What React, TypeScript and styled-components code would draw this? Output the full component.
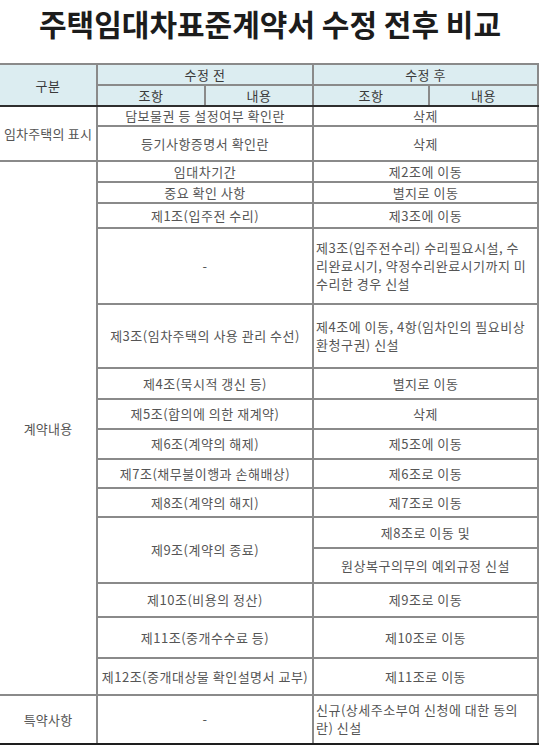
import React from 'react'
import styled, { createGlobalStyle } from 'styled-components'

type Row = {
  group?: string
  span?: number
  before?: string
  beforeSpan?: number
  after: string[]
  left?: boolean
  h: number
  top?: boolean
}

const rows: Row[] = [
  { group: '임차주택의 표시', span: 2, before: '담보물권 등 설정여부 확인란', after: ['삭제'], h: 20, top: true },
  { before: '등기사항증명서 확인란', after: ['삭제'], h: 35 },
  { group: '계약내용', span: 15, before: '임대차기간', after: ['제2조에 이동'], h: 21, top: true },
  { before: '중요 확인 사항', after: ['별지로 이동'], h: 21 },
  { before: '제1조(입주전 수리)', after: ['제3조에 이동'], h: 25 },
  {
    before: '-',
    after: ['제3조(입주전수리) 수리필요시설, 수', '리완료시기, 약정수리완료시기까지 미', '수리한 경우 신설'],
    left: true,
    h: 76,
  },
  {
    before: '제3조(임차주택의 사용 관리 수선)',
    after: ['제4조에 이동, 4항(임차인의 필요비상', '환청구권) 신설'],
    left: true,
    h: 64,
  },
  { before: '제4조(묵시적 갱신 등)', after: ['별지로 이동'], h: 31 },
  { before: '제5조(합의에 의한 재계약)', after: ['삭제'], h: 30 },
  { before: '제6조(계약의 해제)', after: ['제5조에 이동'], h: 30 },
  { before: '제7조(채무불이행과 손해배상)', after: ['제6조로 이동'], h: 29 },
  { before: '제8조(계약의 해지)', after: ['제7조로 이동'], h: 29 },
  { before: '제9조(계약의 종료)', beforeSpan: 2, after: ['제8조로 이동 및'], h: 31 },
  { after: ['원상복구의무의 예외규정 신설'], h: 35 },
  { before: '제10조(비용의 정산)', after: ['제9조로 이동'], h: 34 },
  { before: '제11조(중개수수료 등)', after: ['제10조로 이동'], h: 41 },
  { before: '제12조(중개대상물 확인설명서 교부)', after: ['제11조로 이동'], h: 37 },
  {
    group: '특약사항',
    span: 1,
    before: '-',
    after: ['신규(상세주소부여 신청에 대한 동의', '란) 신설'],
    left: true,
    h: 49,
    top: true,
  },
]

const App = () => {
  return (
    <>
      <GlobalStyle />
      <Page>
        <Title>주택임대차표준계약서 수정 전후 비교</Title>
        <Table>
          <colgroup>
            <col style={{ width: 97 }} />
            <col style={{ width: 108 }} />
            <col style={{ width: 108 }} />
            <col style={{ width: 116 }} />
            <col style={{ width: 109 }} />
          </colgroup>
          <thead>
            <tr style={{ height: 20 }}>
              <Th rowSpan={2}>구분</Th>
              <Th colSpan={2}>수정 전</Th>
              <Th colSpan={2}>수정 후</Th>
            </tr>
            <tr style={{ height: 21 }}>
              <Th>조항</Th>
              <Th>내용</Th>
              <Th>조항</Th>
              <Th>내용</Th>
            </tr>
          </thead>
          <tbody>
            {rows.map((r, i) => (
              <Tr key={i} $h={r.h} $top={r.top}>
                {r.group && <Group rowSpan={r.span}>{r.group}</Group>}
                {r.before && (
                  <Td colSpan={2} rowSpan={r.beforeSpan}>
                    {r.before}
                  </Td>
                )}
                <Td colSpan={2} $left={r.left}>
                  {r.after.map((line, j) => (
                    <div key={j}>{line}</div>
                  ))}
                </Td>
              </Tr>
            ))}
          </tbody>
        </Table>
      </Page>
    </>
  )
}

export default App

const GlobalStyle = createGlobalStyle`
  body {
    margin: 0;
    background: #ffffff;
    font-family: "Noto Sans CJK KR", "Noto Sans", sans-serif;
  }
`

const Page = styled.div`
  width: 540px;
  height: 745px;
  overflow: hidden;
  background: #fff;
`

const Title = styled.h1`
  margin: 0;
  height: 63px;
  padding-top: 4px;
  box-sizing: border-box;
  text-align: center;
  font-size: 30px;
  font-weight: 700;
  line-height: 38px;
  color: #1c1c1c;
  letter-spacing: 0;
`

const Table = styled.table`
  width: 538px;
  border-collapse: collapse;
  table-layout: fixed;
  border-top: 2px solid #2e2e2e;
  border-right: 2px solid #2e2e2e;
  border-bottom: 3px solid #1e1e1e;
  font-size: 13px;
  letter-spacing: 0.5px;
  color: #555;
`

const Th = styled.th`
  background: #dcedf1;
  font-weight: 400;
  color: #3a3a3a;
  border: 2px solid #8a8a8a;
  border-left: none;
  padding: 0;
  text-align: center;
  tr:last-child > & {
    border-bottom: 2px solid #2e2e2e;
  }
  &:first-child {
    border-bottom: 2px solid #2e2e2e;
  }
`

const Tr = styled.tr<{ $h: number; $top?: boolean }>`
  height: ${(p) => p.$h}px;
  & > td {
    border-top: 2px solid ${(p) => (p.$top ? '#3a3a3a' : '#8a8a8a')};
  }
`

const Td = styled.td<{ $left?: boolean }>`
  border: 2px solid #8a8a8a;
  padding: 0 2px;
  text-align: ${(p) => (p.$left ? 'left' : 'center')};
  line-height: 18px;
  white-space: nowrap;
  overflow: hidden;
`

const Group = styled.td`
  border: 2px solid #8a8a8a;
  border-left: none;
  padding: 0;
  text-align: center;
  color: #555;
  white-space: nowrap;
  letter-spacing: 0.2px;
`
